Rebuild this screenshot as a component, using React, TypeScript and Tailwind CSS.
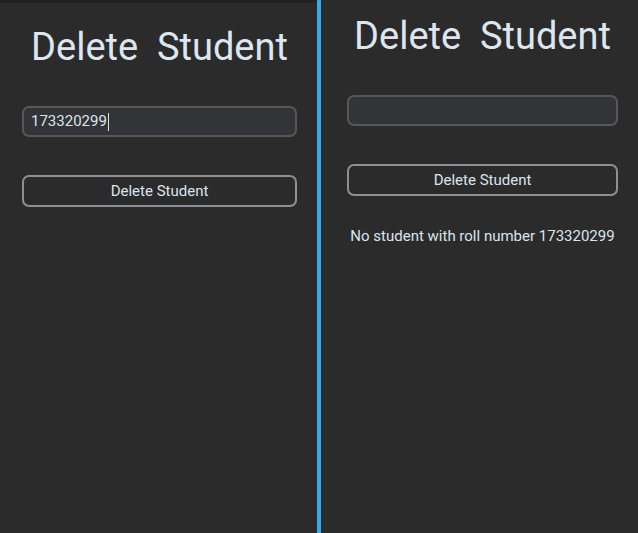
import React from "react";

function Panel({ value, message, top }: { value: string; message?: string; top: string }) {
  return (
    <div className={`flex flex-col ${top}`}>
      <h1 className="text-center text-[38px] leading-[44px] text-[#dde6f0] whitespace-pre">
        {"Delete  Student"}
      </h1>
      <div className="mt-[37px] h-[31px] rounded-[7px] border-2 border-[#54585b] bg-[#323437] flex items-center px-[7px] text-[15px] text-[#dbe4ee]">
        {value}
        {value && <span className="inline-block w-px h-[18px] bg-[#dbe4ee] ml-px" />}
      </div>
      <button className="mt-[38px] h-[32px] rounded-[7px] border-2 border-[#8c9093] text-[15px] text-[#dbe4ee] flex items-center justify-center">
        Delete Student
      </button>
      {message && (
        <div className="mt-[29px] text-center text-[15px] text-[#dbe4ee] whitespace-nowrap">{message}</div>
      )}
    </div>
  );
}

export default function App() {
  return (
    <div className="flex h-[533px] w-[638px] bg-[#2b2b2b]" style={{ fontFamily: "Roboto, sans-serif" }}>
      <div className="w-[317px] flex flex-col">
        <div className="h-[3px] bg-[#222222]" />
        <div className="pl-[22px] pr-[20px]">
          <Panel value="173320299" top="pt-[22px]" />
        </div>
      </div>
      <div className="w-[4px] bg-[#34a9f2]" />
      <div className="flex-1 pl-[26px] pr-[20px]">
        <Panel value="" message="No student with roll number 173320299" top="pt-[14px]" />
      </div>
    </div>
  );
}
